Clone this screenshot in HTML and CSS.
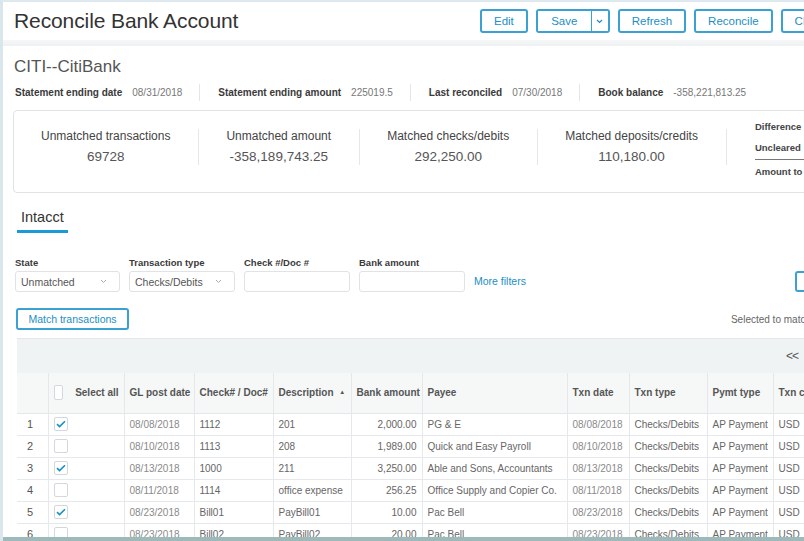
FILE: index.html
```html
<!DOCTYPE html>
<html lang="en">
<head>
<meta charset="utf-8">
<title>Reconcile Bank Account</title>
<link rel="stylesheet" href="styles.css">
</head>
<body>
<div class="viewport">
  <div class="app">
    <header class="topbar">
      <h1 class="title">Reconcile Bank Account</h1>
      <div class="actions">
        <button class="btn">Edit</button>
        <div class="split">
          <button class="split-main">Save</button>
          <button class="split-caret"><svg width="7" height="5" viewBox="0 0 7 5"><path d="M1 1l2.5 2.5L6 1" fill="none" stroke="#1a8fc6" stroke-width="1.2"/></svg></button>
        </div>
        <button class="btn">Refresh</button>
        <button class="btn">Reconcile</button>
        <button class="btn">Close</button>
      </div>
    </header>
    <div class="band"></div>

    <section class="account">
      <h2 class="account-name">CITI--CitiBank</h2>
      <div class="stats">
        <div class="stat"><span class="stat-k">Statement ending date</span><span class="stat-v">08/31/2018</span></div>
        <div class="stat"><span class="stat-k">Statement ending amount</span><span class="stat-v">225019.5</span></div>
        <div class="stat"><span class="stat-k">Last reconciled</span><span class="stat-v">07/30/2018</span></div>
        <div class="stat"><span class="stat-k">Book balance</span><span class="stat-v">-358,221,813.25</span></div>
      </div>
    </section>

    <div class="card">
      <div class="metric"><div class="metric-l">Unmatched transactions</div><div class="metric-v">69728</div></div>
      <div class="metric"><div class="metric-l">Unmatched amount</div><div class="metric-v">-358,189,743.25</div></div>
      <div class="metric"><div class="metric-l">Matched checks/debits</div><div class="metric-v">292,250.00</div></div>
      <div class="metric"><div class="metric-l">Matched deposits/credits</div><div class="metric-v">110,180.00</div></div>
      <div class="diff">
        <div class="diff-row">Difference</div>
        <div class="diff-row sep">Uncleared</div>
        <div class="diff-row">Amount to reconcile</div>
      </div>
    </div>

    <nav class="tabs"><span class="tab active">Intacct</span></nav>

    <div class="filters">
      <div class="field">
        <span class="field-l">State</span>
        <div class="input select">Unmatched<svg class="chev" width="7" height="5" viewBox="0 0 7 5"><path d="M1 1l2.5 2.5L6 1" fill="none" stroke="#aaa" stroke-width="1"/></svg></div>
      </div>
      <div class="field">
        <span class="field-l">Transaction type</span>
        <div class="input select">Checks/Debits<svg class="chev" width="7" height="5" viewBox="0 0 7 5"><path d="M1 1l2.5 2.5L6 1" fill="none" stroke="#aaa" stroke-width="1"/></svg></div>
      </div>
      <div class="field">
        <span class="field-l">Check #/Doc #</span>
        <div class="input"></div>
      </div>
      <div class="field">
        <span class="field-l">Bank amount</span>
        <div class="input"></div>
      </div>
      <a class="link">More filters</a>
      <button class="btn small side">Clear</button>
    </div>

    <div class="match-row">
      <button class="btn match">Match transactions</button>
      <span class="selected">Selected to match: 0.00</span>
    </div>

    <div class="grid">
      <div class="pager"><span class="pager-nav">&lt;&lt;</span></div>
      <table class="tbl">
        <colgroup>
          <col style="width:31px"><col style="width:76px"><col style="width:70px"><col style="width:79px"><col style="width:78px"><col style="width:71px"><col style="width:145px"><col style="width:62px"><col style="width:78px"><col style="width:66px"><col style="width:70px">
        </colgroup>
        <thead>
          <tr>
            <th></th>
            <th><span class="th-sel"><span class="cb big"></span>Select all</span></th>
            <th>GL post date</th>
            <th>Check# / Doc#</th>
            <th>Description <span class="sort">&#9650;</span></th>
            <th>Bank amount</th>
            <th>Payee</th>
            <th>Txn date</th>
            <th>Txn type</th>
            <th>Pymt type</th>
            <th>Txn currency</th>
          </tr>
        </thead>
        <tbody>
          <tr><td class="num">1</td><td><span class="cb on"><svg width="10" height="8" viewBox="0 0 10 8"><path d="M1 4.2l2.6 2.4L9 1.2" fill="none" stroke="#1a8fc6" stroke-width="1.6"/></svg></span></td><td class="dim">08/08/2018</td><td>1112</td><td>201</td><td class="amt">2,000.00</td><td>PG &amp; E</td><td class="dim">08/08/2018</td><td>Checks/Debits</td><td>AP Payment</td><td>USD</td></tr>
          <tr><td class="num">2</td><td><span class="cb"></span></td><td class="dim">08/10/2018</td><td>1113</td><td>208</td><td class="amt">1,989.00</td><td>Quick and Easy Payroll</td><td class="dim">08/10/2018</td><td>Checks/Debits</td><td>AP Payment</td><td>USD</td></tr>
          <tr><td class="num">3</td><td><span class="cb on"><svg width="10" height="8" viewBox="0 0 10 8"><path d="M1 4.2l2.6 2.4L9 1.2" fill="none" stroke="#1a8fc6" stroke-width="1.6"/></svg></span></td><td class="dim">08/13/2018</td><td>1000</td><td>211</td><td class="amt">3,250.00</td><td>Able and Sons, Accountants</td><td class="dim">08/13/2018</td><td>Checks/Debits</td><td>AP Payment</td><td>USD</td></tr>
          <tr><td class="num">4</td><td><span class="cb"></span></td><td class="dim">08/11/2018</td><td>1114</td><td>office expense</td><td class="amt">256.25</td><td>Office Supply and Copier Co.</td><td class="dim">08/11/2018</td><td>Checks/Debits</td><td>AP Payment</td><td>USD</td></tr>
          <tr><td class="num">5</td><td><span class="cb on"><svg width="10" height="8" viewBox="0 0 10 8"><path d="M1 4.2l2.6 2.4L9 1.2" fill="none" stroke="#1a8fc6" stroke-width="1.6"/></svg></span></td><td class="dim">08/23/2018</td><td>Bill01</td><td>PayBill01</td><td class="amt">10.00</td><td>Pac Bell</td><td class="dim">08/23/2018</td><td>Checks/Debits</td><td>AP Payment</td><td>USD</td></tr>
          <tr><td class="num">6</td><td><span class="cb"></span></td><td class="dim">08/23/2018</td><td>Bill02</td><td>PayBill02</td><td class="amt">20.00</td><td>Pac Bell</td><td class="dim">08/23/2018</td><td>Checks/Debits</td><td>AP Payment</td><td>USD</td></tr>
        </tbody>
      </table>
    </div>
  </div>
  <div class="bottombar"></div>
</div>
</body>
</html>
```

FILE: styles.css
```css
* { box-sizing: border-box; margin: 0; padding: 0; }
html, body { width: 804px; height: 541px; overflow: hidden; background: #fff; }
body { font-family: "Liberation Sans", Arial, Helvetica, sans-serif; color: #555; }
button { font-family: inherit; background: #fff; cursor: pointer; }

.viewport {
  height: 541px;
  display: flex;
  flex-direction: column;
  border-left: 3px solid #d9e7ed;
  border-top: 2px solid #dde9ee;
  overflow: hidden;
}
.app { flex: 1; width: 849px; min-height: 0; overflow: hidden; }
.bottombar { height: 4px; flex: none; background: #9db9b9; }

/* header */
.topbar { display: flex; align-items: center; height: 38px; padding: 0 14px 0 11px; }
.title { font-size: 21px; font-weight: normal; color: #333; letter-spacing: -0.1px; }
.actions { margin-left: auto; display: flex; gap: 8px; }
.btn {
  height: 24px;
  padding: 0 12px;
  border: 2px solid #3aa2d3;
  border-radius: 3px;
  color: #1a8fc6;
  font-size: 11.5px;
}
.split { display: flex; height: 24px; border: 2px solid #3aa2d3; border-radius: 3px; }
.split-main { width: 53px; border: 0; color: #1a8fc6; font-size: 11.5px; }
.split-caret { width: 17px; border: 0; border-left: 1.5px solid #3aa2d3; display: flex; align-items: center; justify-content: center; }
.band { height: 6px; background: linear-gradient(#f5f7f8, #eef1f2); }

/* account info */
.account { padding: 11px 0 0 11px; }
.account-name { font-size: 17px; font-weight: normal; color: #555; line-height: 20px; }
.stats { display: flex; margin-top: 7px; }
.stat { display: flex; gap: 10px; padding: 0 17px 0 18px; border-left: 1px solid #e3e6e8; line-height: 17px; font-size: 10px; }
.stat:first-child { border-left: 0; padding-left: 1px; }
.stat-k { font-weight: bold; color: #3a3a3a; }
.stat-v { color: #777; }

/* summary card */
.card {
  margin: 9px 0 0 10px;
  border: 1px solid #dfe3e5;
  border-radius: 4px;
  display: flex;
  align-items: flex-start;
}
.metric { margin-top: 18px; padding: 0 28px 0 27px; border-right: 1px solid #e5e8ea; text-align: center; height: 36px; }
.metric-l { font-size: 12px; line-height: 14px; color: #444; }
.metric-v { font-size: 13.5px; line-height: 16px; margin-top: 6px; color: #555; }
.diff { padding: 9px 0 13px 28px; font-size: 9.5px; font-weight: bold; color: #444; flex: 1; }
.diff-row { line-height: 14px; }
.diff-row + .diff-row { margin-top: 7px; }
.diff-row.sep { padding-bottom: 4px; border-bottom: 1px solid #777; }
.diff-row.sep + .diff-row { margin-top: 5px; }

/* tabs */
.tabs { margin: 16px 0 0 14px; display: flex; }
.tab { padding: 0 4px 5px; font-size: 14.5px; line-height: 16px; color: #333; }
.tab.active { border-bottom: 3px solid #1a9ad6; }

/* filters */
.filters { display: flex; align-items: flex-end; gap: 9px; margin: 24px 14px 0 12px; }
.field { display: flex; flex-direction: column; gap: 2px; }
.field-l { font-size: 9.5px; font-weight: bold; color: #3a3a3a; line-height: 12px; }
.input {
  width: 106px;
  height: 21px;
  border: 1px solid #dfe3e5;
  border-radius: 3px;
  font-size: 10.5px;
  color: #555;
  display: flex;
  align-items: center;
  padding: 0 5px;
}
.field:first-child .input { width: 105px; }
.select { justify-content: space-between; padding-right: 12px; }
.link { color: #1a8fc6; font-size: 10.5px; line-height: 21px; }
.side { margin-left: auto; height: 21px; width: 43px; font-size: 10px; }

.match-row { display: flex; align-items: center; margin: 16px 14px 0 13px; }
.btn.match { height: 22px; width: 113px; padding: 0; font-size: 10.5px; }
.selected { margin-left: auto; font-size: 10px; color: #666; margin-right: 2px; }

/* grid */
.grid { margin: 8px 0 0 14px; }
.pager {
  height: 35px;
  background: #eff3f4;
  border-top: 1px solid #e2e7e9;
  display: flex;
  align-items: center;
  padding-left: 769px;
}
.pager-nav { font-size: 12px; color: #555; letter-spacing: -1px; }

.tbl { border-collapse: collapse; table-layout: fixed; width: 826px; font-size: 10px; }
.tbl th {
  height: 40px;
  background: #f6f8f8;
  text-align: left;
  font-weight: bold;
  font-size: 10px;
  color: #555;
  padding: 0 5px;
  border: 1px solid #e4e8ea;
  border-top: 0;
  white-space: nowrap;
  overflow: hidden;
}
.tbl th:first-child { border-left: 0; }
.tbl td {
  height: 22px;
  padding: 0 5px;
  color: #666;
  border: 1px solid #e6e9eb;
  white-space: nowrap;
  overflow: hidden;
}
.tbl td:first-child { border-left: 0; }
.tbl td.num { padding-left: 10px; font-size: 11px; color: #555; }
.tbl td.dim { color: #8a8a8a; }
.tbl td.amt { text-align: right; }
.th-sel { display: flex; align-items: center; gap: 12px; }
.cb {
  width: 14px;
  height: 14px;
  border: 1px solid #d3d8db;
  border-radius: 2px;
  background: #fff;
  display: flex;
  align-items: center;
  justify-content: center;
}
.cb.big { width: 15px; height: 15px; }
.sort { font-size: 6px; color: #555; vertical-align: 2px; margin-left: 3px; }
```
